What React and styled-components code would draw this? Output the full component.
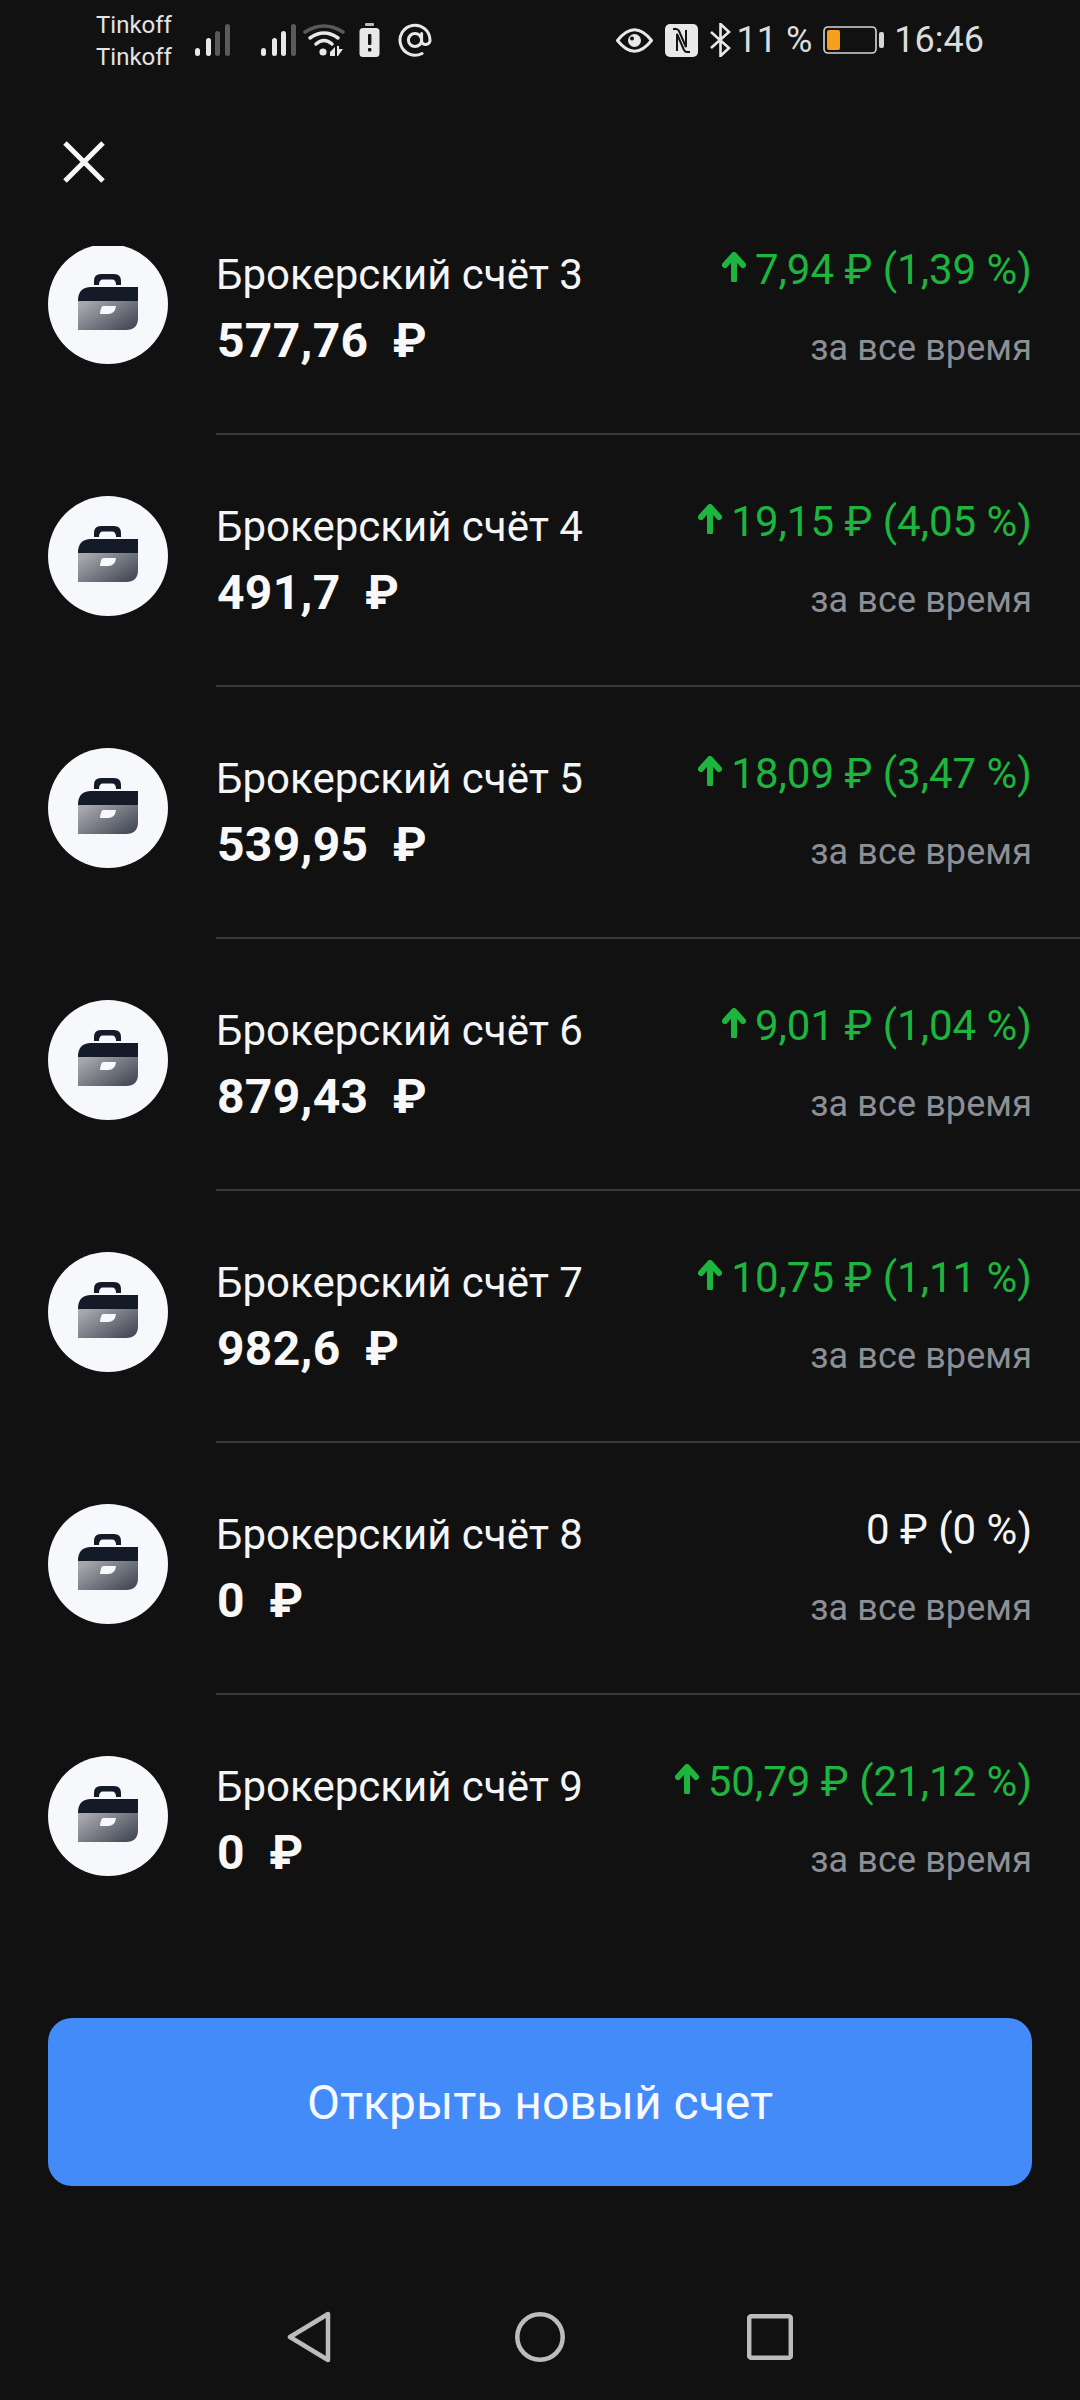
import React from 'react'
import styled, { createGlobalStyle } from 'styled-components'

const GlobalStyle = createGlobalStyle`
    html, body {
        margin: 0;
        padding: 0;
        background: #111112;
    }
    * {
        box-sizing: border-box;
    }
`

const Page = styled.div`
    width: 1080px;
    height: 2400px;
    display: flex;
    flex-direction: column;
    overflow: hidden;
    background: #111112;
    color: #f6f7f8;
    font-family: Roboto, "Liberation Sans", sans-serif;
`

const StatusBar = styled.div`
    height: 80px;
    flex: none;
    display: flex;
    align-items: center;
    justify-content: space-between;
    padding: 0 96px 0 96px;
    color: #e4e4e4;
`

const StatusGroup = styled.div`
    display: flex;
    align-items: center;
`

const StatusIcon = styled.span`
    display: flex;
    margin-left: ${props => props.$gap || 0}px;
`

const Carrier = styled.div`
    width: 98px;
    font-size: 24px;
    line-height: 32px;
    margin-top: 2px;
`

const StatusText = styled.span`
    margin-left: ${props => props.$gap || 0}px;
    font-size: 36px;
    line-height: 40px;
    color: #dcdcdc;
    font-weight: 400;
`

const Header = styled.div`
    height: 166px;
    flex: none;
    padding: 61px 0 0 63px;
`

const List = styled.div`
    height: 1772px;
    flex: none;
    overflow: hidden;
`

const ScrollArea = styled.div`
    margin-top: -63px;
`

const Row = styled.div`
    display: flex;
    align-items: flex-start;
    padding-left: 48px;
`

const IconCircle = styled.div`
    width: 120px;
    height: 120px;
    flex: none;
    margin: 61px 48px 0 0;
    padding-bottom: 4px;
    border-radius: 50%;
    background: #f6f8fb;
    display: flex;
    align-items: center;
    justify-content: center;
`

const RowBody = styled.div`
    flex: 1;
    height: 252px;
    padding: 0 48px 0 0;
    display: flex;
    justify-content: space-between;
    border-bottom: ${props => (props.$last ? 'none' : '2px solid #3a3a3c')};
`

const LeftColumn = styled.div`
    padding-top: 67px;
    display: flex;
    flex-direction: column;
`

const Title = styled.div`
    font-size: 42px;
    line-height: 50px;
    color: #f4f5f6;
`

const Amount = styled.div`
    font-size: 48px;
    line-height: 54px;
    margin: 14px 0 0 1px;
    font-weight: 700;
    letter-spacing: 0.3px;
    white-space: pre;
    color: #f8f8f8;
`

const RightColumn = styled.div`
    padding-top: 62px;
    display: flex;
    flex-direction: column;
    align-items: flex-end;
`

const Change = styled.div`
    display: flex;
    align-items: center;
    gap: 9px;
    font-size: 42px;
    line-height: 50px;
    white-space: pre;
    color: ${props => (props.$up ? '#1db53e' : '#f4f5f6')};
`

const Period = styled.div`
    margin-top: 33px;
    font-size: 36px;
    line-height: 40px;
    letter-spacing: 0.1px;
    color: #8c8f96;
`

const OpenButton = styled.button`
    flex: none;
    height: 168px;
    margin: 0 48px;
    border: none;
    border-radius: 24px;
    background: #428bf9;
    color: #f5f8ff;
    font-family: inherit;
    font-size: 48px;
`

const NavBar = styled.div`
    flex: none;
    display: flex;
    align-items: center;
    gap: 182px;
    padding: 125px 0 0 287px;
`

const accounts = [
    { name: 'Брокерский счёт 3', amount: '577,76', change: '7,94 ₽ (1,39 %)', up: true },
    { name: 'Брокерский счёт 4', amount: '491,7', change: '19,15 ₽ (4,05 %)', up: true },
    { name: 'Брокерский счёт 5', amount: '539,95', change: '18,09 ₽ (3,47 %)', up: true },
    { name: 'Брокерский счёт 6', amount: '879,43', change: '9,01 ₽ (1,04 %)', up: true },
    { name: 'Брокерский счёт 7', amount: '982,6', change: '10,75 ₽ (1,11 %)', up: true },
    { name: 'Брокерский счёт 8', amount: '0', change: '0 ₽ (0 %)', up: false },
    { name: 'Брокерский счёт 9', amount: '0', change: '50,79 ₽ (21,12 %)', up: true },
]

const Signal = ({ bars }) => (
    <svg width="38" height="34" viewBox="0 0 38 34">
        <rect x="1" y="25" width="5" height="8" rx="2.5" fill="#e8e8e8" />
        <rect x="12" y="15" width="5" height="18" rx="2.5" fill="#e8e8e8" />
        <rect x="21" y="8" width="5" height="25" rx="2.5" fill={bars > 2 ? '#e8e8e8' : '#5a5a5a'} />
        <rect x="31" y="1" width="5" height="32" rx="2.5" fill="#5a5a5a" />
    </svg>
)

const Wifi = () => (
    <svg width="42" height="34" viewBox="0 0 42 34" fill="none" strokeLinecap="round">
        <path d="M2 9 Q21 -3 40 9" stroke="#5a5a5a" strokeWidth="3.5" />
        <path d="M7 15 Q21 5 35 15" stroke="#e8e8e8" strokeWidth="3.5" />
        <path d="M13 21 Q21 14 29 21" stroke="#e8e8e8" strokeWidth="3.5" />
        <circle cx="20" cy="29" r="3.6" fill="#e8e8e8" />
        <path d="M27 29 L32 24 V33 H27 Z M34 23 H36 V26 H40 L35 33 H34 Z" fill="#e8e8e8" />
    </svg>
)

const BatteryAlert = () => (
    <svg width="21" height="34" viewBox="0 0 21 34">
        <rect x="6" y="0" width="9" height="3" rx="1" fill="#bdbdbd" />
        <rect x="0.5" y="5" width="20" height="29" rx="3.5" fill="#e8e8e8" />
        <rect x="9" y="11" width="3.4" height="11" rx="1" fill="#141414" />
        <rect x="9" y="25" width="3.4" height="3.6" rx="1" fill="#141414" />
    </svg>
)

const AtSign = () => (
    <svg width="34" height="34" viewBox="0 0 34 34" fill="none" stroke="#e8e8e8" strokeWidth="3">
        <circle cx="17" cy="17" r="6.6" />
        <path d="M23.6 10.5 V19 A4.5 4.5 0 0 0 32 18 V17 A15 15 0 1 0 24 30.5" strokeLinecap="round" />
    </svg>
)

const Eye = () => (
    <svg width="37" height="25" viewBox="0 0 37 25" fill="none">
        <path d="M1.5 12.5 Q18.5 -9 35.5 12.5 Q18.5 34 1.5 12.5 Z" stroke="#e8e8e8" strokeWidth="3" />
        <circle cx="18.5" cy="12.5" r="6.5" fill="#e8e8e8" />
        <circle cx="16" cy="10.5" r="2" fill="#141414" />
    </svg>
)

const NfcMark = () => (
    <svg width="33" height="33" viewBox="0 0 33 33">
        <rect width="33" height="33" rx="5" fill="#e8e8e8" />
        <path d="M8 5 H11 Q13 5 14 7 L21 23 V6 M25 28 H22 Q20 28 19 26 L12 10 V27" fill="none" stroke="#141414" strokeWidth="2" />
    </svg>
)

const Bluetooth = () => (
    <svg width="21" height="34" viewBox="0 0 21 34" fill="none" stroke="#e8e8e8" strokeWidth="2.6">
        <path d="M1 9 L19 25 L10.5 33 V1 L19 9 L1 25" />
    </svg>
)

const Battery = () => (
    <svg width="61" height="28" viewBox="0 0 61 28">
        <rect x="1" y="1" width="52" height="26" rx="4" fill="none" stroke="#d6d6d6" strokeWidth="1.6" />
        <rect x="4" y="4" width="13" height="20" rx="2" fill="#f7a01d" />
        <rect x="56" y="6" width="5" height="16" rx="2" fill="#d6d6d6" />
    </svg>
)

const CloseIcon = () => (
    <svg width="42" height="42" viewBox="0 0 42 42" style={{ display: 'block' }}>
        <path d="M2 2 L40 40 M40 2 L2 40" stroke="#f8f8f8" strokeWidth="5" />
    </svg>
)

const Briefcase = () => (
    <svg width="60" height="56" viewBox="0 0 60 56">
        <defs>
            <linearGradient id="caseBody" x1="0" y1="0" x2="1" y2="0.75">
                <stop offset="0.1" stopColor="#a6a8ac" />
                <stop offset="1" stopColor="#474c5a" />
            </linearGradient>
        </defs>
        <path d="M16 11 V7 Q16 0 23 0 H36 Q43 0 43 7 V11 H38 Q38 5.5 34 5.5 H25 Q21 5.5 21 11 Z" fill="#141a28" />
        <path d="M0 27 Q0 13 13 13 H60 V27 Z" fill="#141a28" />
        <path d="M0 27 H60 V44 Q60 56 48 56 H0 Z" fill="url(#caseBody)" />
        <path d="M25 32 H38 Q37 40 30 40 H22 Q23 32 25 32 Z" fill="#f6f8fb" />
    </svg>
)

const UpArrow = () => (
    <svg width="24" height="30" viewBox="0 0 24 30" style={{ marginTop: -6 }}>
        <path d="M12 3 L21 13 M12 3 L3 13 M12 4 V28" stroke="#1db53e" strokeWidth="6" fill="none" strokeLinecap="round" />
    </svg>
)

const BackIcon = () => (
    <svg width="46" height="52" viewBox="0 0 46 52" fill="none">
        <path d="M41 3 V49 L3 26 Z" stroke="#bcbcbc" strokeWidth="4.5" strokeLinejoin="round" />
    </svg>
)

const HomeIcon = () => (
    <svg width="50" height="50" viewBox="0 0 50 50" fill="none">
        <circle cx="25" cy="25" r="22.7" stroke="#bcbcbc" strokeWidth="4.5" />
    </svg>
)

const RecentsIcon = () => (
    <svg width="46" height="46" viewBox="0 0 46 46" fill="none">
        <rect x="2.2" y="2.2" width="41.6" height="41.6" rx="2" stroke="#bcbcbc" strokeWidth="4.5" />
    </svg>
)

const App = () => {
    return (
        <Page>
            <GlobalStyle />
            <StatusBar>
                <StatusGroup>
                    <Carrier>Tinkoff<br />Tinkoff</Carrier>
                    <StatusIcon><Signal bars={2} /></StatusIcon>
                    <StatusIcon $gap={28}><Signal bars={3} /></StatusIcon>
                    <StatusIcon $gap={5}><Wifi /></StatusIcon>
                    <StatusIcon $gap={14}><BatteryAlert /></StatusIcon>
                    <StatusIcon $gap={18}><AtSign /></StatusIcon>
                </StatusGroup>
                <StatusGroup>
                    <StatusIcon><Eye /></StatusIcon>
                    <StatusIcon $gap={12}><NfcMark /></StatusIcon>
                    <StatusIcon $gap={12}><Bluetooth /></StatusIcon>
                    <StatusText $gap={6}>11 %</StatusText>
                    <StatusIcon $gap={11}><Battery /></StatusIcon>
                    <StatusText $gap={10}>16:46</StatusText>
                </StatusGroup>
            </StatusBar>
            <Header>
                <CloseIcon />
            </Header>
            <List>
                <ScrollArea>
                    {accounts.map((account, i) => (
                        <Row key={account.name}>
                            <IconCircle>
                                <Briefcase />
                            </IconCircle>
                            <RowBody $last={i === accounts.length - 1}>
                                <LeftColumn>
                                    <Title>{account.name}</Title>
                                    <Amount>{account.amount}  ₽</Amount>
                                </LeftColumn>
                                <RightColumn>
                                    <Change $up={account.up}>
                                        {account.up && <UpArrow />}
                                        <span>{account.change}</span>
                                    </Change>
                                    <Period>за все время</Period>
                                </RightColumn>
                            </RowBody>
                        </Row>
                    ))}
                </ScrollArea>
            </List>
            <OpenButton>Открыть новый счет</OpenButton>
            <NavBar>
                <BackIcon />
                <HomeIcon />
                <RecentsIcon />
            </NavBar>
        </Page>
    )
}

export default App
